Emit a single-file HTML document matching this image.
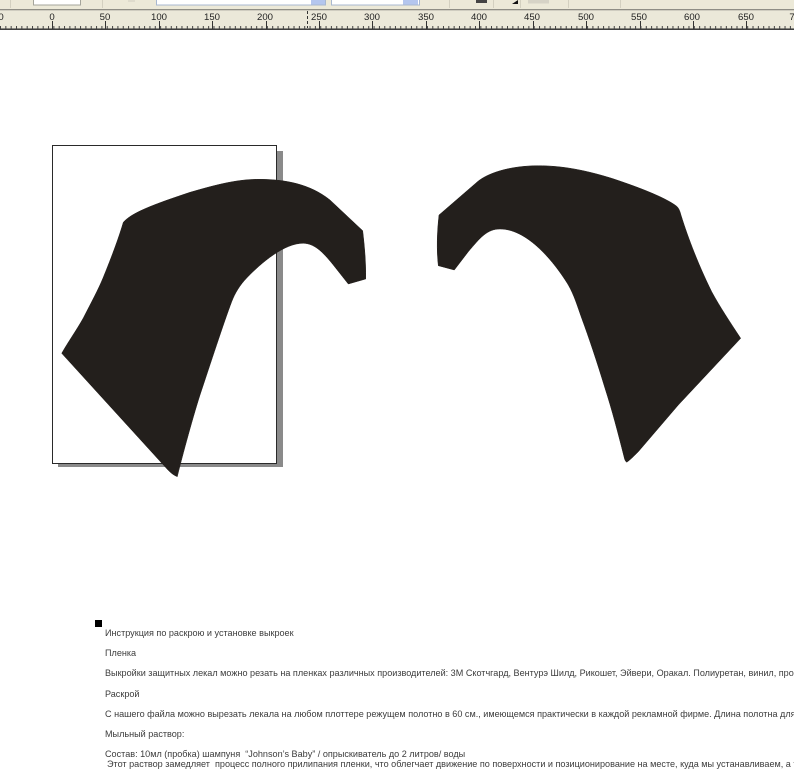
<!DOCTYPE html>
<html lang="ru"><head><meta charset="utf-8"><style>
html,body{margin:0;padding:0;background:#fff}
#p{position:relative;width:794px;height:778px;overflow:hidden;background:#fff;font-family:"Liberation Sans",sans-serif}
.t{position:absolute;left:105px;font-size:9.08px;line-height:11px;color:#3c3c3c;white-space:pre;filter:blur(.25px)}
</style></head><body><div id="p">
<svg width="794" height="778" viewBox="0 0 794 778" style="position:absolute;left:0;top:0">
<rect x="0" y="0" width="794" height="29" fill="#ebe8d9"/>
<rect x="0" y="0" width="794" height="9" fill="#ece9d8"/>
<rect x="0" y="9" width="794" height="1.3" fill="#8f8e85"/>
<rect x="0" y="28.5" width="794" height="1.4" fill="#2a2a2a"/>
<g fill="none" stroke="#d3d0c0"><path d="M10.5 0V8M102.5 0V8M449.5 0V8M493.5 0V8M520.5 0V8M568.5 0V8M620.5 0V8"/></g>
<rect x="33.5" y="-2" width="47" height="7" fill="#fff" stroke="#a5a59b"/>
<rect x="156.5" y="-2" width="169" height="7" fill="#fff" stroke="#a8b8d0"/>
<rect x="311" y="0" width="14" height="4.5" fill="#b4c6ee"/>
<rect x="331.5" y="-2" width="88" height="7" fill="#fff" stroke="#a8b8d0"/>
<rect x="403" y="0" width="15" height="4.5" fill="#b4c6ee"/>
<rect x="476" y="0" width="11" height="3" fill="#444"/>
<path d="M512 4L518 0V4Z" fill="#111"/>
<rect x="528" y="0" width="21" height="3.5" fill="#d6d3c6"/>
<rect x="128" y="0" width="7" height="2" fill="#dedbcc"/>
<g stroke="#333" stroke-width="1" fill="none">
<path d="M52.5 21V29M105.5 21V29M159.5 21V29M212.5 21V29M266.5 21V29M319.5 21V29M372.5 21V29M426.5 21V29M479.5 21V29M533.5 21V29M586.5 21V29M640.5 21V29M693.5 21V29M746.5 21V29"/>
</g>
<path d="M0 27.5H794" stroke="#444" stroke-width="3" stroke-dasharray="1 4.337" fill="none"/>
<path d="M307.5 11V28" stroke="#333" stroke-dasharray="3 2" fill="none"/>
<g font-family="Liberation Sans, sans-serif" font-size="9.6" fill="#222" text-anchor="middle">
<text x="1" y="20">0</text><text x="52" y="20">0</text><text x="105" y="20">50</text><text x="159" y="20">100</text><text x="212" y="20">150</text><text x="265" y="20">200</text><text x="319" y="20">250</text><text x="372" y="20">300</text><text x="426" y="20">350</text><text x="479" y="20">400</text><text x="532" y="20">450</text><text x="586" y="20">500</text><text x="639" y="20">550</text><text x="692" y="20">600</text><text x="746" y="20">650</text><text x="792" y="20">7</text>
</g>
<rect x="58" y="151" width="225" height="316" fill="#8a8a8a"/>
<rect x="52.5" y="145.5" width="224" height="318" fill="#fff" stroke="#2a2a2a"/>
<path fill="#231f1c" stroke="#231f1c" stroke-width=".5" stroke-linejoin="round" d="M123.3 222.3C132 212 158 203 190 192.3C215 185 236 179.5 256.7 179.3C285 179 310 184 330 200L362.7 230.7C364.5 246 366 262 365.7 279L348.3 284L333.3 265C322 251 314 243.5 303.3 243.3C285 243 262 262 246.7 278C240 285 235 293 231.7 301.7C224 322 210 365 200 395C192 420 180 465 177.3 476.7C173 475 170 472 168 470L61.7 353.3C68 342 76 331 83.3 318C92 301 98 290 103 278C112 256 119 237 123.3 222.3Z"/>
<path fill="#231f1c" stroke="#231f1c" stroke-width=".5" stroke-linejoin="round" d="M439 215L478.3 181C490 172 512 165.7 538.3 165.7C562 165.7 585 170 611.7 178.3C635 186 662 196 675 205C678 207 679 209 680 211.7C686 232 697 262 711.7 291.7C720 307 730 322 740.7 338.3L678.3 405L638.3 451.7C633 457 630 460 626.7 462.3C625 461 624.5 459 624 456.7C618 433 612 410 605 388.3C597 362 589 338 581.7 318.3C577 305 574 295 568.3 285C558 268 530 229 500 229C487 229 480 238 468.3 251.7L454.3 270L438.3 265.7C436.5 250 437 232 439 215Z"/>
<rect x="95" y="620" width="7" height="7" fill="#000"/>
</svg>
<div class="t" style="top:628px">Инструкция по раскрою и установке выкроек</div>
<div class="t" style="top:648px">Пленка</div>
<div class="t" style="top:668px">Выкройки защитных лекал можно резать на пленках различных производителей: 3М Скотчгард, Вентурэ Шилд, Рикошет, Эйвери, Оракал. Полиуретан, винил, прозрачные пленки</div>
<div class="t" style="top:689px">Раскрой</div>
<div class="t" style="top:709px">С нашего файла можно вырезать лекала на любом плоттере режущем полотно в 60 см., имеющемся практически в каждой рекламной фирме. Длина полотна для раскроя</div>
<div class="t" style="top:729px">Мыльный раствор:</div>
<div class="t" style="top:749px">Состав: 10мл (пробка) шампуня  “Johnson’s Baby” / опрыскиватель до 2 литров/ воды</div>
<div class="t" style="top:759px;left:107px">Этот раствор замедляет  процесс полного прилипания пленки, что облегчает движение по поверхности и позиционирование на месте, куда мы устанавливаем, а также</div>
</div></body></html>
